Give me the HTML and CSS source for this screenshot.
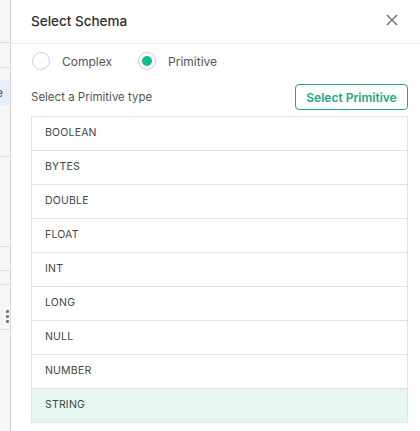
FILE: index.html
```html
<!DOCTYPE html>
<html>
<head>
<meta charset="utf-8">
<link rel="stylesheet" href="styles.css">
</head>
<body>
<div class="page-bg">
  <div class="bg-row h42"></div>
  <div class="bg-row h25"></div>
  <div class="bg-gap h12"></div>
  <div class="bg-hl"><span class="bg-char">e</span></div>
  <div class="bg-row h52"></div>
  <div class="bg-row h90"></div>
  <div class="bg-row h24"></div>
  <div class="bg-row h14"></div>
  <div class="bg-row h45"></div>
  <div class="handle"><i></i><i></i><i></i></div>
</div>
<div class="drawer">
  <div class="header">
    <div class="title">Select Schema</div>
    <svg class="close" width="13" height="13" viewBox="0 0 13 13"><path d="M1 1L12 12M12 1L1 12" stroke="#6b6b6b" stroke-width="1.4" fill="none"/></svg>
  </div>
  <div class="radios">
    <label class="radio"><span class="circle"></span><span>Complex</span></label>
    <label class="radio"><span class="circle on"></span><span>Primitive</span></label>
  </div>
  <div class="toolbar">
    <div class="hint">Select a Primitive type</div>
    <button class="btn">Select Primitive</button>
  </div>
  <div class="list">
    <div class="item">BOOLEAN</div>
    <div class="item">BYTES</div>
    <div class="item">DOUBLE</div>
    <div class="item">FLOAT</div>
    <div class="item">INT</div>
    <div class="item">LONG</div>
    <div class="item">NULL</div>
    <div class="item">NUMBER</div>
    <div class="item selected">STRING</div>
  </div>
</div>
</body>
</html>
```
FILE: styles.css
```css
* { box-sizing: border-box; }
html, body { margin: 0; padding: 0; }
body {
  width: 420px;
  height: 431px;
  overflow: hidden;
  display: flex;
  font-family: Inter, "Noto Sans", Roboto, sans-serif;
  background: #fff;
}
.page-bg {
  width: 11px;
  flex: none;
  background: #f6f6f6;
  border-right: 1px solid #d6d6d6;
  position: relative;
  display: flex;
  flex-direction: column;
}
.bg-row { border-bottom: 1px solid #dcdcdc; }
.h42 { height: 43px; }
.h25 { height: 25px; }
.h12 { height: 12px; }
.h52 { height: 52px; }
.h90 { height: 90px; }
.h24 { height: 24px; }
.h14 { height: 14px; }
.h45 { height: 45px; }
.bg-hl {
  height: 25px;
  background: #e6eefa;
  overflow: hidden;
  position: relative;
}
.bg-char {
  position: absolute;
  left: -4px;
  top: 5px;
  font-size: 12px;
  color: #555;
}
.handle {
  position: absolute;
  left: 6px;
  top: 310px;
  display: flex;
  flex-direction: column;
  gap: 2px;
}
.handle i {
  display: block;
  width: 3px;
  height: 3px;
  background: #777;
  border-radius: 1px;
}
.drawer {
  flex: 1;
  display: flex;
  flex-direction: column;
  background: #fff;
}
.header {
  height: 44px;
  border-bottom: 1px solid #ececec;
  display: flex;
  align-items: center;
  justify-content: space-between;
  padding: 0 22px 0 20px;
}
.title {
  font-size: 13.5px;
  font-weight: 500;
  color: #2f2f2f;
  margin-top: -2px;
}
.close { margin-top: -3px; width: 12px; height: 12px; }
.radios {
  display: flex;
  align-items: center;
  gap: 26px;
  padding-left: 21px;
  margin-top: 8px;
  height: 18px;
}
.radio {
  display: flex;
  align-items: center;
  gap: 12px;
  font-size: 12px;
  color: #555;
}
.circle {
  width: 18px;
  height: 18px;
  border: 1px solid #cfcfcf;
  border-radius: 50%;
  display: flex;
  align-items: center;
  justify-content: center;
}
.circle.on::after {
  content: "";
  width: 10px;
  height: 10px;
  border-radius: 50%;
  background: #0dbf8c;
}
.toolbar {
  display: flex;
  align-items: center;
  justify-content: space-between;
  margin-top: 14px;
  padding: 0 12px 0 20px;
  height: 26px;
}
.hint {
  font-size: 11.5px;
  color: #555;
}
.btn {
  height: 26px;
  width: 113px;
  border: 1px solid #1aa889;
  border-radius: 4px;
  background: #fff;
  color: #1aa889;
  font-family: inherit;
  font-size: 12px;
  font-weight: 600;
  padding: 0;
}
.list {
  margin: 6px 12px 0 20px;
  border: 1px solid #e3e3e3;
}
.item {
  height: 34px;
  border-bottom: 1px solid #e3e3e3;
  display: flex;
  align-items: center;
  padding: 0 0 2px 13px;
  font-size: 10.5px;
  color: #444;
  letter-spacing: 0.2px;
}
.item:last-child { border-bottom: 0; height: 33px; }
.item.selected { background: #e6f7f3; }
```
